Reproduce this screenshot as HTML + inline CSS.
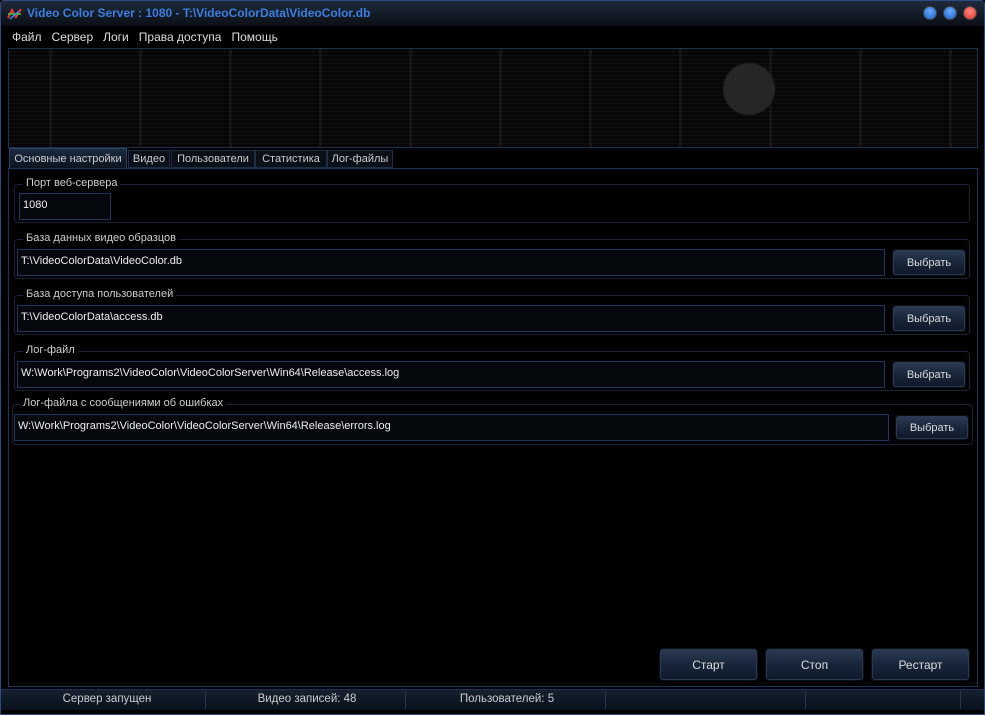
<!DOCTYPE html>
<html><head><meta charset="utf-8"><style>
*{box-sizing:border-box;margin:0;padding:0}
body{width:985px;height:715px;background:#000;font-family:"Liberation Sans",sans-serif;font-size:11px;color:#d8d8d8;position:relative;overflow:hidden;white-space:nowrap}
.abs{position:absolute}
.win{left:0;top:0;width:985px;height:715px;border:1px solid #2c4c80;border-radius:4px 4px 0 0;background:#000}
.title{left:1px;top:1px;width:983px;height:25px;background:linear-gradient(#1f2a3b,#0b0f16);}
.title span{position:absolute;left:26px;top:5px;color:#3a7fe0;font-weight:bold;font-size:12px}
.btn{width:14px;height:14px;border-radius:50%;top:6px;border:1px solid #444;}
.menu{top:30px;left:12px;font-size:12px;color:#ddd}
.menu span{margin-right:10px}
.banner{left:8px;top:48px;width:970px;height:100px;border:1px solid #1d3050;background:
radial-gradient(circle at 740px 40px,#262626 0 25px,transparent 27px),
repeating-linear-gradient(90deg,transparent 0 40px,rgba(50,50,50,.3) 40px 43px,transparent 43px 90px),
repeating-linear-gradient(0deg,#070707 0 3px,#0f0f0f 3px 4px),#080808}
.tab{top:150px;height:18px;border:1px solid #1c2e48;background:#0a0f18;color:#ccc;font-size:11px;padding:2px 0 0;text-align:center}
.tab.act{top:148px;height:21px;padding-top:4px;background:linear-gradient(#1c2a40,#0c1420);border-color:#2a4466}
.panel{left:8px;top:168px;width:970px;height:519px;border:1px solid #1d3556}
.grp{border:1px solid #1a2333;border-radius:4px}
.leg{background:#000;padding:0 3px;color:#cfcfcf;font-size:11px}
.inp{border:1px solid #1f3760;background:#05080d;color:#eee;font-size:11px;padding:5px 3px}
.b{border:1px solid #2b3a52;border-radius:3px;background:linear-gradient(#2a3a52,#18263a 50%,#0f1a2b);color:#ddd;text-align:center;font-size:11px;box-shadow:0 0 0 1px #0a0f18}
.status{left:1px;top:689px;width:983px;height:21px;background:linear-gradient(#15202f,#0a111c);border-top:1px solid #1e3050;color:#ccc;font-size:11.5px}
.status div{position:absolute;top:3px;text-align:center}
.sep{position:absolute;top:1px;width:1px;height:18px;background:#243650}
</style></head><body>
<div class="abs win"></div>
<div class="abs title"><svg class="abs" style="left:6px;top:7px" width="16" height="12"><path d="M1 10 L5 2 L9 9 L14 1" stroke="#e33" stroke-width="2" fill="none"/><path d="M1 6 L14 6" stroke="#3c3" stroke-width="1.5"/><path d="M3 11 L12 3" stroke="#38f" stroke-width="1.5"/></svg><span>Video Color Server : 1080 - T:\VideoColorData\VideoColor.db</span></div>
<div class="abs btn" style="left:923px;background:radial-gradient(circle at 50% 35%,#6af,#1a5fc8)"></div>
<div class="abs btn" style="left:943px;background:radial-gradient(circle at 50% 35%,#6af,#1a5fc8)"></div>
<div class="abs btn" style="left:963px;background:radial-gradient(circle at 50% 35%,#f87,#d33)"></div>
<div class="abs menu"><span>Файл</span><span>Сервер</span><span>Логи</span><span>Права доступа</span><span>Помощь</span></div>
<div class="abs banner"></div>
<div class="abs tab act" style="left:9px;width:118px">Основные настройки</div>
<div class="abs tab" style="left:128px;width:42px">Видео</div>
<div class="abs tab" style="left:171px;width:84px">Пользователи</div>
<div class="abs tab" style="left:255px;width:72px">Статистика</div>
<div class="abs tab" style="left:327px;width:66px">Лог-файлы</div>
<div class="abs panel"></div>

<div class="abs grp" style="left:14px;top:184px;width:956px;height:39px"></div>
<div class="abs leg" style="left:23px;top:177px">Порт веб-сервера</div>
<div class="abs inp" style="left:19px;top:193px;width:92px;height:27px">1080</div>

<div class="abs grp" style="left:14px;top:239px;width:956px;height:40px"></div>
<div class="abs leg" style="left:23px;top:232px">База данных видео образцов</div>
<div class="abs inp" style="left:17px;top:249px;width:868px;height:27px">T:\VideoColorData\VideoColor.db</div>
<div class="abs b" style="left:893px;top:250px;width:72px;height:25px;line-height:24px">Выбрать</div>

<div class="abs grp" style="left:14px;top:295px;width:956px;height:40px"></div>
<div class="abs leg" style="left:23px;top:288px">База доступа пользователей</div>
<div class="abs inp" style="left:17px;top:305px;width:868px;height:27px">T:\VideoColorData\access.db</div>
<div class="abs b" style="left:893px;top:306px;width:72px;height:25px;line-height:24px">Выбрать</div>

<div class="abs grp" style="left:14px;top:351px;width:956px;height:40px"></div>
<div class="abs leg" style="left:23px;top:344px">Лог-файл</div>
<div class="abs inp" style="left:17px;top:361px;width:868px;height:27px">W:\Work\Programs2\VideoColor\VideoColorServer\Win64\Release\access.log</div>
<div class="abs b" style="left:893px;top:362px;width:72px;height:25px;line-height:24px">Выбрать</div>

<div class="abs grp" style="left:12px;top:404px;width:961px;height:41px"></div>
<div class="abs leg" style="left:20px;top:397px">Лог-файла с сообщениями об ошибках</div>
<div class="abs inp" style="left:14px;top:414px;width:875px;height:27px">W:\Work\Programs2\VideoColor\VideoColorServer\Win64\Release\errors.log</div>
<div class="abs b" style="left:896px;top:416px;width:72px;height:23px;line-height:22px">Выбрать</div>

<div class="abs b" style="left:660px;top:649px;width:97px;height:31px;line-height:30px;font-size:12px">Старт</div>
<div class="abs b" style="left:766px;top:649px;width:97px;height:31px;line-height:30px;font-size:12px">Стоп</div>
<div class="abs b" style="left:872px;top:649px;width:97px;height:31px;line-height:30px;font-size:12px">Рестарт</div>

<div class="abs status">
<div style="left:6px;width:200px">Сервер запущен</div><span class="sep" style="left:204px"></span>
<div style="left:206px;width:200px">Видео записей: 48</div><span class="sep" style="left:404px"></span>
<div style="left:406px;width:200px">Пользователей: 5</div><span class="sep" style="left:604px"></span>
<span class="sep" style="left:804px"></span><span class="sep" style="left:959px"></span>
</div>
</body></html>
